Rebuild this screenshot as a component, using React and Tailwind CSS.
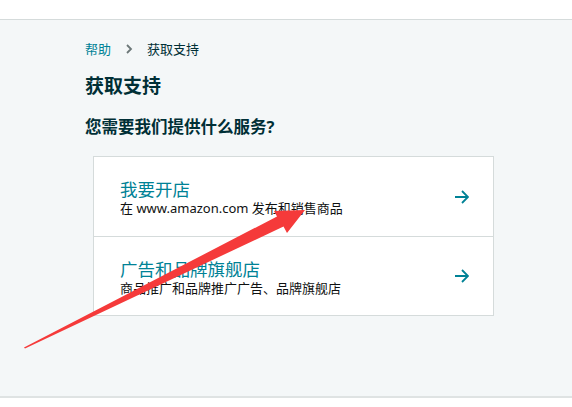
import React from 'react';

const font = { fontFamily: '"Noto Sans", "Noto Sans CJK SC", sans-serif' };

const options = [
  { title: '我要开店', desc: '在 www.amazon.com 发布和销售商品' },
  { title: '广告和品牌旗舰店', desc: '商品推广和品牌推广广告、品牌旗舰店' },
];

const ArrowRight = () => (
  <svg width="14" height="14" viewBox="0 0 14 14" fill="none" stroke="#008296" strokeWidth="1.8">
    <path d="M0 7h13M7 1l6 6-6 6" />
  </svg>
);

const App = () => {
  return (
    <div className="w-[572px] h-[407px] bg-white overflow-hidden relative" style={font}>
      <div className="h-[20px] border-b border-[#d5dbdb] bg-white"></div>
      <div className="h-[378px] bg-[#f4f7f8] border-b-2 border-[#dfe3e3] pl-[85px] pt-[19px]">
        <div className="flex items-center text-[13px] leading-[20px]">
          <span className="text-[#008296]">帮助</span>
          <span className="ml-[14px] mr-[13px] text-[#6c7778]">
            <svg width="9" height="10" viewBox="0 0 9 10" fill="none" stroke="#6c7778" strokeWidth="1.8">
              <path d="M2 1l4 4-4 4" />
            </svg>
          </span>
          <span className="text-[#002f36]">获取支持</span>
        </div>
        <h1 className="mt-[15px] text-[19px] leading-[24px] font-bold text-[#002f36]">获取支持</h1>
        <h2 className="mt-[18px] text-[16.5px] leading-[22px] font-bold text-[#002f36]">您需要我们提供什么服务?</h2>
        <div className="mt-[18px] ml-[8px] w-[401px] bg-white border border-[#d5dbdb]">
          {options.map((o, i) => (
            <div
              key={i}
              className={`h-[79px] flex items-center justify-between pl-[26px] pr-[24px] ${i > 0 ? 'border-t border-[#d5dbdb]' : ''}`}
            >
              <div className="pt-[2px]">
                <div className="text-[17.5px] leading-[22px] text-[#008296]">{o.title}</div>
                <div className="text-[13px] leading-[17px] text-[#0f1111]">{o.desc}</div>
              </div>
              <ArrowRight />
            </div>
          ))}
        </div>
      </div>
      <svg className="absolute left-0 top-0 pointer-events-none" width="572" height="407">
        <polygon
          points="24,347.5 277,216.5 274,211 305,210 287,233 283.5,226.5 25,348.5"
          fill="#f53a3a"
        />
      </svg>
    </div>
  );
};

export default App;
